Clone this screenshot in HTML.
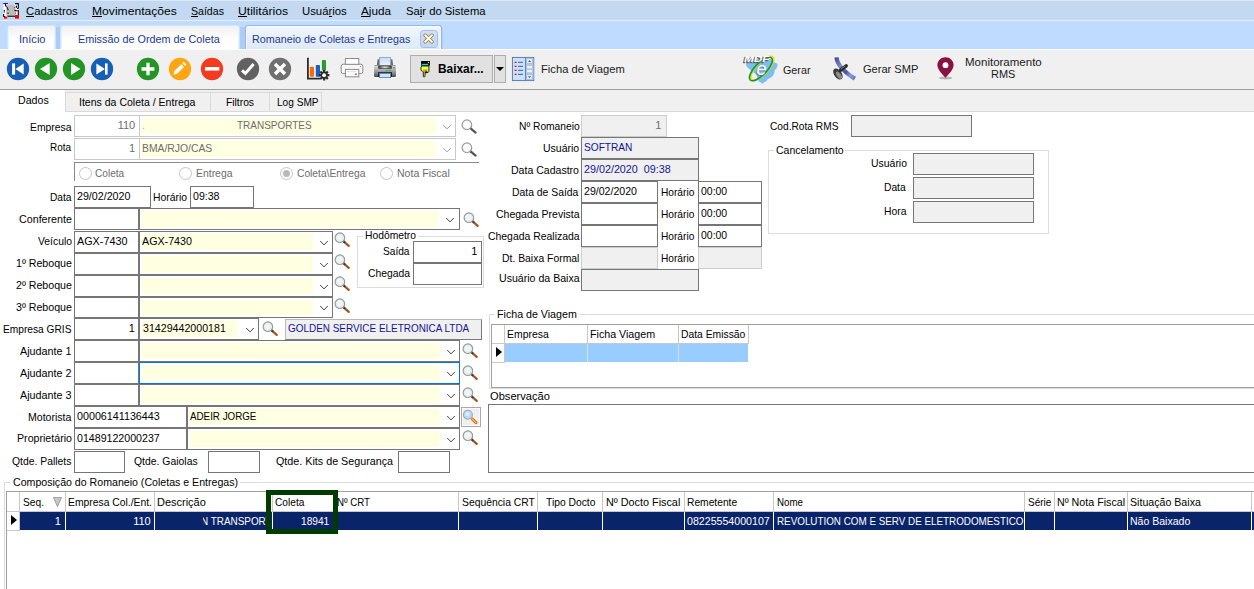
<!DOCTYPE html>
<html lang="pt-BR">
<head>
<meta charset="utf-8">
<title>Romaneio de Coletas e Entregas</title>
<style>
html,body{margin:0;padding:0;background:#fff;}
body{width:1254px;height:589px;overflow:hidden;font-family:"Liberation Sans",sans-serif;font-size:11px;}
#app{position:relative;width:1254px;height:589px;overflow:hidden;background:#fff;}
#app div,#app span,#app svg{position:absolute;box-sizing:border-box;}
.t{white-space:pre;line-height:13px;transform-origin:0 50%;}
.f{border:1px solid #767676;background:#fff;}
.fg{border:1px solid #767676;background:#f0f0f0;}
.fl{border:1px solid #c8c8c8;background:#fff;}
.flg{border:1px solid #cdcdcd;background:#f0f0f0;}
.y{background:#ffffe1;}
.gb{border:1px solid #dcdcdc;}
.hd{background:#fff;border-right:1px solid #c8c8c8;border-bottom:1px solid #c8c8c8;}
.nv{background:#0a246a;}
</style>
</head>
<body>
<div id="app">
<div style="left:0;top:0;width:1254px;height:21px;background:#c2d9f1;border-top:1px solid #dbe8f7;border-bottom:1px solid #e3eefb;"></div>
<div style="left:0;top:21px;width:1254px;height:28px;background:#bfdbff;"></div>
<div style="left:0;top:49px;width:1254px;height:40px;background:#f0f0f0;border-top:1px solid #fbfcfe;"></div>
<div style="left:0;top:89px;width:1254px;height:1px;background:#a0a0a0;"></div>
<div style="left:0;top:90px;width:1254px;height:22px;background:#f0f0f0;border-bottom:1px solid #d9d9d9;"></div>
<svg style="left:3px;top:3px;width:16px;height:16px;overflow:visible" viewBox="0 0 16 16"><rect x="0.3" y="1" width="4.500" height="12.500" fill="#fff"/><rect x="11" y="1" width="4.700" height="11.500" fill="#fff"/><rect x="3.200" y="2.200" width="9.300" height="10.800" fill="#bcbcbc"/><rect x="0.200" y="0" width="4.800" height="1.100" fill="#0a18e8"/><rect x="12.300" y="0" width="3.400" height="1.100" fill="#0a18e8"/><path d="M2.500 1v1.500l1 1.200M4 4.300l1 1.300M5 6v1.200M5 9.500v1.300M0.800 7.200l1 0.600M0.800 8.800l1 0.500M0.600 11v2.300l1.500 0.500M4.500 13.300h7.500M12 0.700h3.300v4.500l-1.300 0.300M13.500 2.800v2M11.500 4.500l0.600 0.300M11.500 7l1 0.800h2M12.300 9.800l0.500 0.500M15.300 7v5.500" stroke="#000" stroke-width="1.100" fill="none"/><rect x="1" y="13.600" width="3.200" height="2" fill="#ff0000"/><rect x="12" y="12" width="4" height="3.600" fill="#ff0000"/></svg>
<span class="t" style="font-size:11.5px;color:#000;transform:scaleX(0.9868);left:26.00px;top:4.52px;line-height:13px;">Cadastros</span>
<div style="left:26.00px;top:16px;width:8.20px;height:1px;background:#000;"></div>
<span class="t" style="font-size:11.5px;color:#000;transform:scaleX(1.0534);left:92.10px;top:4.52px;line-height:13px;">Movimentações</span>
<div style="left:92.10px;top:16px;width:10.09px;height:1px;background:#000;"></div>
<span class="t" style="font-size:11.5px;color:#000;transform:scaleX(0.9195);left:190.90px;top:4.52px;line-height:13px;">Saídas</span>
<div style="left:190.90px;top:16px;width:7.05px;height:1px;background:#000;"></div>
<span class="t" style="font-size:11.5px;color:#000;transform:scaleX(1.0572);left:238.00px;top:4.52px;line-height:13px;">Utilitários</span>
<div style="left:238.00px;top:16px;width:8.79px;height:1px;background:#000;"></div>
<span class="t" style="font-size:11.5px;color:#000;transform:scaleX(0.9851);left:302.10px;top:4.52px;line-height:13px;">Usuários</span>
<div style="left:328.54px;top:16px;width:3.77px;height:1px;background:#000;"></div>
<span class="t" style="font-size:11.5px;color:#000;transform:scaleX(1.0202);left:361.20px;top:4.52px;line-height:13px;">Ajuda</span>
<div style="left:361.20px;top:16px;width:7.83px;height:1px;background:#000;"></div>
<span class="t" style="font-size:11.5px;color:#000;transform:scaleX(0.9798);left:405.90px;top:4.52px;line-height:13px;">Sair do Sistema</span>
<div style="left:419.68px;top:16px;width:2.51px;height:1px;background:#000;"></div>
<div style="left:55px;top:27px;width:5px;height:22px;background:#afccf7;"></div>
<div style="left:240px;top:27px;width:5.5px;height:22px;background:#afccf7;"></div>
<div style="left:441px;top:28px;width:1.5px;height:21px;background:#afccf7;"></div>
<div style="left:7px;top:25px;width:48.5px;height:24px;background:linear-gradient(#f1f1f1,#fdfdfd 55%,#fff);border:1px solid #cfe3f7;border-bottom:0;border-radius:3px 3px 0 0;box-shadow:inset 1px 0 0 #dff6ff,inset -1px 0 0 #dff6ff;"></div>
<div style="left:59.5px;top:25px;width:180.5px;height:24px;background:linear-gradient(#f1f1f1,#fdfdfd 55%,#fff);border:1px solid #cfe3f7;border-bottom:0;border-radius:3px 3px 0 0;box-shadow:inset 1px 0 0 #dff6ff,inset -1px 0 0 #dff6ff;"></div>
<div style="left:245px;top:25px;width:196.5px;height:24px;background:linear-gradient(#f1f6fd,#dee9f8);border:1px solid #94b9ea;border-bottom:0;border-radius:3px 3px 0 0;box-shadow:inset 0 1px 0 #fbfdff,inset 1px 0 0 #f4f8fe,inset -1px 0 0 #f4f8fe;"></div>
<span class="t" style="font-size:11.5px;color:#1c3a8e;transform:scaleX(0.9647);left:19.00px;top:32.52px;line-height:13px;">Início</span>
<span class="t" style="font-size:11.5px;color:#1c3a8e;transform:scaleX(0.9399);left:78.10px;top:32.52px;line-height:13px;">Emissão de Ordem de Coleta</span>
<span class="t" style="font-size:11.5px;color:#1c3a8e;transform:scaleX(0.9350);left:252.00px;top:32.52px;line-height:13px;">Romaneio de Coletas e Entregas</span>
<svg style="left:420px;top:30px;width:18px;height:18px;overflow:visible" viewBox="0 0 18 18"><defs><linearGradient id="cbg" x1="0" y1="0" x2="0" y2="1"><stop offset="0" stop-color="#cfe0f6"/><stop offset="1" stop-color="#c3d7f1"/></linearGradient></defs><rect x="0.5" y="0.5" width="17" height="17" rx="2.8" fill="url(#cbg)" stroke="#a3c0e8"/><path d="M5.2 5.300l6.700 6.400M11.900 5.300L5.200 11.700" stroke="#8a7528" stroke-width="3.600" stroke-linecap="round"/><path d="M5.200 5.300l6.700 6.400M11.900 5.300L5.200 11.700" stroke="#fffef6" stroke-width="2.100" stroke-linecap="round"/></svg>
<svg style="left:5.8px;top:57px;width:24px;height:24px;overflow:visible" viewBox="-12 -12 24 24"><circle r="11.15" fill="#175eb5"/><rect x="-5.9" y="-5.6" width="3" height="11.2" fill="#fff"/><path d="M-2.6 0L5.7 -5.6V5.6Z" fill="#fff"/></svg>
<svg style="left:33.9px;top:57px;width:24px;height:24px;overflow:visible" viewBox="-12 -12 24 24"><circle r="11.15" fill="#259427"/><path d="M-6 0L3.7 -5.9V5.9Z" fill="#fff"/></svg>
<svg style="left:61.9px;top:57px;width:24px;height:24px;overflow:visible" viewBox="-12 -12 24 24"><circle r="11.15" fill="#259427"/><path d="M6.4 0L-2.9 -5.9V5.9Z" fill="#fff"/></svg>
<svg style="left:90px;top:57px;width:24px;height:24px;overflow:visible" viewBox="-12 -12 24 24"><circle r="11.15" fill="#175eb5"/><rect x="3" y="-5.6" width="2.6" height="11.2" fill="#fff"/><path d="M2.9 0L-5.6 -5.6V5.6Z" fill="#fff"/></svg>
<svg style="left:136px;top:57px;width:24px;height:24px;overflow:visible" viewBox="-12 -12 24 24"><circle r="11.15" fill="#259427"/><path d="M-6.5 0H6.4M0 -6.2V6.2" stroke="#fff" stroke-width="3.3"/></svg>
<svg style="left:167.8px;top:57px;width:24px;height:24px;overflow:visible" viewBox="-12 -12 24 24"><circle r="11.15" fill="#fea50f"/><path d="M-6.600 5.800l1-3.700 6.800-6.800 2.700 2.700-6.800 6.800z" fill="#fff"/><path d="M2.300-5.800l1.400-1.400 2.700 2.700-1.400 1.400z" fill="#fff"/></svg>
<svg style="left:199.6px;top:57px;width:24px;height:24px;overflow:visible" viewBox="-12 -12 24 24"><circle r="11.15" fill="#f43b20"/><path d="M-7 -0.2H7.3" stroke="#fff" stroke-width="3.6"/></svg>
<svg style="left:235.8px;top:57px;width:24px;height:24px;overflow:visible" viewBox="-12 -12 24 24"><circle r="11.15" fill="#616161"/><path d="M-6 1.3L-2.6 4.4L5.6 -5" stroke="#fff" stroke-width="3" fill="none"/></svg>
<svg style="left:267.9px;top:57px;width:24px;height:24px;overflow:visible" viewBox="-12 -12 24 24"><circle r="11.15" fill="#707070"/><path d="M-5 -5L5 5M5 -5L-5 5" stroke="#fff" stroke-width="3.4"/></svg>
<svg style="left:306px;top:57px;width:24px;height:24px;overflow:visible" viewBox="0 0 24 24"><path d="M1.9 1.3V21.6H14" stroke="#2b2b2b" stroke-width="1.8" fill="none" stroke-linecap="round"/><rect x="3.8" y="9.7" width="4.2" height="10.1" rx="0.8" fill="#ff6a00"/><rect x="9.8" y="7.9" width="4.2" height="11.9" rx="0.8" fill="#1a5fc4"/><rect x="15.9" y="3" width="4.1" height="10.6" rx="0.8" fill="#2a9a2a"/><g transform="translate(18.1 18.2)"><circle r="3.6" fill="#2b2b2b"/><g stroke="#2b2b2b" stroke-width="2.2"><path d="M0-5.3V5.3M-5.3 0H5.3M-3.75-3.75L3.75 3.75M3.75-3.75L-3.75 3.75"/></g><circle r="1.9" fill="#fff"/></g></svg>
<svg style="left:340px;top:57px;width:24px;height:22px;overflow:visible" viewBox="0 0 24 22"><rect x="1.2" y="7.2" width="21.6" height="9.4" rx="2" fill="#f7f7f7" stroke="#8c8c8c" stroke-width="1"/><rect x="5.4" y="1.5" width="13.4" height="5.8" fill="#fff" stroke="#8c8c8c" stroke-width="1"/><rect x="5.4" y="12.4" width="13.4" height="7.4" fill="#fff" stroke="#8c8c8c" stroke-width="1"/><rect x="7" y="14.3" width="9" height="0.8" fill="#d8d8d8"/><rect x="15.2" y="16.5" width="1.6" height="1.6" fill="#c04070"/><rect x="20" y="9" width="1.2" height="1.2" fill="#ff7a7a"/></svg>
<svg style="left:373px;top:56px;width:24px;height:24px;overflow:visible" viewBox="0 0 24 24"><defs><linearGradient id="pg" x1="0" y1="0" x2="0" y2="1"><stop offset="0" stop-color="#4d4d4d"/><stop offset="0.08" stop-color="#d8d8d8"/><stop offset="0.5" stop-color="#a2a2a2"/><stop offset="0.85" stop-color="#6a6a6a"/><stop offset="1" stop-color="#3c3c3c"/></linearGradient><linearGradient id="pb" x1="0" y1="0" x2="0" y2="1"><stop offset="0" stop-color="#c6dbf2"/><stop offset="1" stop-color="#e9f1fb"/></linearGradient><radialGradient id="ps" cx="0.5" cy="0.5" r="0.5"><stop offset="0" stop-color="#fff"/><stop offset="0.5" stop-color="#999"/><stop offset="1" stop-color="#2c2c2c"/></radialGradient></defs><rect x="0.2" y="8" width="23.600" height="14.600" rx="2.500" fill="#fff" opacity="0.7"/><path d="M4.600 3.200h14.800l0.800 6H3.800z" fill="#6e6e6e"/><rect x="6.600" y="1.400" width="11" height="8" fill="url(#pb)" stroke="#7ba7d9" stroke-width="0.9"/><rect x="1" y="9" width="22" height="12" rx="1.200" fill="url(#pg)"/><rect x="5.300" y="9.700" width="13.400" height="3" fill="url(#ps)"/><rect x="20" y="11.200" width="1.800" height="1.200" fill="#666"/><rect x="12.800" y="14.100" width="2" height="1.100" fill="#18c818"/><rect x="15.900" y="14.100" width="2" height="1.100" fill="#18c818"/><rect x="5.100" y="16.100" width="13.900" height="4.900" fill="#1e1e1e"/><rect x="6.600" y="17.300" width="11" height="4.300" fill="#d3e4f7" stroke="#4a80c8" stroke-width="0.9"/></svg>
<div style="left:410px;top:55px;width:83px;height:28px;background:#e1e1e1;border:1px solid #adadad;"></div>
<div style="left:494px;top:55px;width:12px;height:28px;background:#e1e1e1;border:1px solid #adadad;"></div>
<div style="left:496px;top:67px;width:0;height:0;border-left:4px solid transparent;border-right:4px solid transparent;border-top:4px solid #000;"></div>
<svg style="left:419px;top:60px;width:12px;height:18px;overflow:visible" viewBox="0 0 12 18"><rect x="2.100" y="1" width="8.800" height="4.700" fill="#000"/><rect x="2.900" y="3.800" width="6.300" height="1.400" fill="#10d8e8"/><rect x="8.800" y="1.800" width="1.300" height="1.300" fill="#f0e020"/><path d="M2 6h8v5.400l-0.900 1.100h-1.200l-0.400-1.100l-0.300 1.600h-1l-0.300-1.200l-0.300 2.200v2.200l-1 1l-1-1v-4.200l-0.600-0.500l-1.200-0.600l-0.800-1v-2.400z" fill="#ffff40" stroke="#000" stroke-width="0.9" stroke-linejoin="round" transform="translate(1.100 0) scale(0.88 1)"/><path d="M4.900 9.500v2.500M6.300 9.500v3M7.700 9.500v2.200" stroke="#000" stroke-width="0.500"/></svg>
<span class="t" style="font-size:12px;color:#000;transform:scaleX(0.9910);font-weight:bold;left:437.60px;top:63.44px;line-height:13px;">Baixar...</span>
<svg style="left:512px;top:57px;width:22.2px;height:24px;overflow:visible" viewBox="0 0 22.2 24"><rect x="0.4" y="0.4" width="21.4" height="23.2" fill="#cfe0f4" stroke="#4776b4" stroke-width="0.9"/><rect x="13" y="0.4" width="0.9" height="23.2" fill="#4776b4"/><rect x="13.9" y="0.9" width="7.4" height="22.2" fill="#b4cbe8"/><rect x="2.6" y="4.7" width="2" height="1.3" fill="#e02020"/><rect x="6" y="4.8" width="5" height="1.1" fill="#3a70c0"/><rect x="2.6" y="8.7" width="2" height="1.3" fill="#e02020"/><rect x="6" y="8.8" width="5" height="1.1" fill="#3a70c0"/><rect x="2.6" y="12.7" width="2" height="1.3" fill="#e02020"/><rect x="6" y="12.8" width="5" height="1.1" fill="#3a70c0"/><rect x="2.6" y="16.7" width="2" height="1.3" fill="#e02020"/><rect x="6" y="16.8" width="5" height="1.1" fill="#3a70c0"/><rect x="14.6" y="1.6" width="6" height="5" rx="0.8" fill="#e6eef9" stroke="#7f9fca" stroke-width="0.5"/><rect x="14.6" y="17.4" width="6" height="5" rx="0.8" fill="#e6eef9" stroke="#7f9fca" stroke-width="0.5"/><rect x="14.6" y="8.4" width="6" height="3.4" rx="0.8" fill="#eef3fa" stroke="#8faad0" stroke-width="0.5"/><rect x="14.6" y="12.4" width="6" height="3.4" rx="0.8" fill="#eef3fa" stroke="#8faad0" stroke-width="0.5"/><path d="M16 5l1.6-1.8L19.2 5z" fill="#35598f"/><path d="M16 19.2l1.6 1.8 1.6-1.8z" fill="#35598f"/></svg>
<span class="t" style="font-size:11.5px;color:#1a1a1a;transform:scaleX(0.9725);left:540.70px;top:62.52px;line-height:13px;">Ficha de Viagem</span>
<svg style="left:743px;top:55px;width:35px;height:30px;overflow:visible" viewBox="0 0 35 30"><path d="M3 9.200l1-3.200l4-2.200l6 0.400l4-1.600l5 0.200l4 1.200l3 2l2 1.800l2.200 0.800l0.400 2.400l-1.200 2.500l-1.700 1.500l-0.400 3l-1.600 3l-2.500 2l-2.500 1l-1.500 2.500l-2 0.500l-1.700 2l-1.600-1.500l-2-1l-1.400-2.500l-0.500-3l-2-2.500l-3-1.500l-2-2.500l-3-2.500z" fill="#7cbef0"/><ellipse cx="19.300" cy="13.200" rx="15.300" ry="5.900" transform="rotate(-46 19.300 13.200)" fill="none" stroke="#f2d81c" stroke-width="1.700"/><ellipse cx="17.900" cy="14" rx="15.300" ry="5.900" transform="rotate(-46 17.900 14)" fill="none" stroke="#10993a" stroke-width="1.600"/><text x="12.700" y="20.700" font-family="Liberation Sans, sans-serif" font-style="italic" font-size="18" fill="#666" opacity="0.7">e</text><text x="13.400" y="20" font-family="Liberation Sans, sans-serif" font-style="italic" font-size="18" fill="#fff">e</text><text x="0" y="7.900" font-family="Liberation Sans, sans-serif" font-style="italic" font-weight="bold" font-size="9.200" fill="#555" stroke="#666" stroke-width="0.500" textLength="25.500" lengthAdjust="spacingAndGlyphs">MDF</text><text x="0.900" y="7.200" font-family="Liberation Sans, sans-serif" font-style="italic" font-weight="bold" font-size="9.200" fill="#fff" textLength="25.500" lengthAdjust="spacingAndGlyphs">MDF</text></svg>
<span class="t" style="font-size:11.5px;color:#1a1a1a;transform:scaleX(0.9362);left:782.80px;top:64.02px;line-height:13px;">Gerar</span>
<svg style="left:833px;top:57px;width:24px;height:24px;overflow:visible" viewBox="0 0 24 24"><defs><linearGradient id="sg" x1="0" y1="0" x2="1" y2="1"><stop offset="0" stop-color="#46509a"/><stop offset="0.3" stop-color="#7a86cc"/><stop offset="0.6" stop-color="#4a549e"/><stop offset="0.8" stop-color="#8c98da"/><stop offset="1" stop-color="#6878c0"/></linearGradient></defs><path d="M3.500 0.400C4.200 7.500 11 15 21.900 21.700" stroke="url(#sg)" stroke-width="4.300" fill="none"/><ellipse cx="4.900" cy="17" rx="3.700" ry="6.300" transform="rotate(-36 4.900 17)" fill="#3a3a3a"/><ellipse cx="5.900" cy="18.200" rx="2" ry="4.200" transform="rotate(-36 5.900 18.200)" fill="#8e8e8e"/><path d="M7.600 13.200L13.200 8.900" stroke="#262626" stroke-width="3.400" stroke-linecap="round"/><path d="M8.200 12L12 9.200" stroke="#8a8a8a" stroke-width="0.900" stroke-linecap="round"/></svg>
<span class="t" style="font-size:11px;color:#1a1a1a;transform:scaleX(1.0049);left:863.30px;top:63.09px;line-height:13px;">Gerar SMP</span>
<svg style="left:937px;top:57px;width:17px;height:22.5px;overflow:visible" viewBox="0 0 17 22.5"><ellipse cx="8.6" cy="21" rx="6.800" ry="1.500" fill="#b5b5b5"/><path d="M8.500 0.300c-4.500 0-8.100 3.400-8.100 7.700c0 4.900 5.200 9.300 8.100 12.800c2.900-3.500 8.100-7.900 8.100-12.800c0-4.300-3.600-7.700-8.100-7.700z" fill="#8c1141"/><circle cx="8.500" cy="8.200" r="2.900" fill="#fff"/></svg>
<span class="t" style="font-size:11px;color:#1a1a1a;transform:scaleX(1.0462);left:965.40px;top:55.99px;line-height:13px;">Monitoramento</span>
<span class="t" style="font-size:11px;color:#1a1a1a;transform:scaleX(0.9944);left:991.30px;top:67.79px;line-height:13px;">RMS</span>
<div style="left:0;top:90px;width:65px;height:22px;background:#fff;"></div>
<div style="left:65px;top:92px;width:257px;height:20px;background:#f0f0f0;border:1px solid #d9d9d9;"></div>
<div style="left:210px;top:92px;width:1px;height:20px;background:#d9d9d9;"></div>
<div style="left:269px;top:92px;width:1px;height:20px;background:#d9d9d9;"></div>
<span class="t" style="font-size:11px;color:#000;transform:scaleX(0.9650);left:18.00px;top:94.29px;line-height:13px;">Dados</span>
<span class="t" style="font-size:11px;color:#000;transform:scaleX(0.9572);left:79.10px;top:96.19px;line-height:13px;">Itens da Coleta / Entrega</span>
<span class="t" style="font-size:11px;color:#000;transform:scaleX(0.9353);left:226.40px;top:96.19px;line-height:13px;">Filtros</span>
<span class="t" style="font-size:11px;color:#000;transform:scaleX(0.9187);left:276.50px;top:96.19px;line-height:13px;">Log SMP</span>
<span class="t" style="font-size:11px;color:#000;transform:scaleX(0.9425);left:30.10px;top:120.69px;line-height:13px;">Empresa</span>
<div class="fl" style="left:74px;top:115px;width:66px;height:22px;"></div>
<span class="t" style="font-size:11px;color:#6d6d6d;left:117.64px;top:118.89px;line-height:13px;">110</span>
<div class="fl" style="left:139px;top:115px;width:317px;height:22px;"></div>
<div class="y" style="left:142px;top:118px;width:294px;height:16px;"></div>
<svg style="left:442px;top:122.5px;width:10px;height:8px;overflow:visible" viewBox="-5 -4 10 8"><path d="M-3.800 -2L0 1.900L3.800 -2" stroke="#a0a0a0" stroke-width="1" fill="none"/></svg>
<span class="t" style="font-size:11px;color:#e8a050;left:142.00px;top:118.89px;line-height:13px;">.</span>
<span class="t" style="font-size:11px;color:#6d6d6d;transform:scaleX(0.9061);left:237.20px;top:118.89px;line-height:13px;">TRANSPORTES</span>
<svg style="left:461.4px;top:118.7px;width:16px;height:15px;overflow:visible" viewBox="0 0 16 15"><path d="M9.600 9.400L14.600 13.600" stroke="#555" stroke-width="2.200" stroke-linecap="round"/><circle cx="5.900" cy="5.700" r="4.800" fill="#f0f3f4" stroke="#9a9a9a" stroke-width="1.200"/><circle cx="5.900" cy="5.700" r="3.500" fill="#fafcfc"/></svg>
<span class="t" style="font-size:11px;color:#000;transform:scaleX(0.9032);left:49.60px;top:140.89px;line-height:13px;">Rota</span>
<div class="fl" style="left:74px;top:138px;width:66px;height:22px;"></div>
<span class="t" style="font-size:11px;color:#6d6d6d;left:129.07px;top:141.89px;line-height:13px;">1</span>
<div class="fl" style="left:139px;top:138px;width:317px;height:22px;"></div>
<div class="y" style="left:142px;top:141px;width:294px;height:16px;"></div>
<svg style="left:442px;top:145.5px;width:10px;height:8px;overflow:visible" viewBox="-5 -4 10 8"><path d="M-3.800 -2L0 1.900L3.800 -2" stroke="#a0a0a0" stroke-width="1" fill="none"/></svg>
<span class="t" style="font-size:11px;color:#6d6d6d;transform:scaleX(0.9424);left:142.00px;top:141.89px;line-height:13px;">BMA/RJO/CAS</span>
<svg style="left:461.4px;top:141.8px;width:16px;height:15px;overflow:visible" viewBox="0 0 16 15"><path d="M9.600 9.400L14.600 13.600" stroke="#555" stroke-width="2.200" stroke-linecap="round"/><circle cx="5.900" cy="5.700" r="4.800" fill="#f0f3f4" stroke="#9a9a9a" stroke-width="1.200"/><circle cx="5.900" cy="5.700" r="3.500" fill="#fafcfc"/></svg>
<div style="left:74px;top:162px;width:405px;height:1px;background:#8a8a8a;"></div>
<div style="left:74px;top:162px;width:1px;height:19px;background:#8a8a8a;"></div>
<div style="left:78.7px;top:166.5px;width:13px;height:13px;border-radius:50%;border:1px solid #c4c4c4;background:#fff;"></div>
<div style="left:179.4px;top:166.5px;width:13px;height:13px;border-radius:50%;border:1px solid #c4c4c4;background:#fff;"></div>
<div style="left:279.9px;top:166.5px;width:13px;height:13px;border-radius:50%;border:1px solid #c4c4c4;background:#fff;"></div>
<div style="left:282.9px;top:169.5px;width:7px;height:7px;border-radius:50%;background:#b9b9b9;"></div>
<div style="left:380.4px;top:166.5px;width:13px;height:13px;border-radius:50%;border:1px solid #c4c4c4;background:#fff;"></div>
<span class="t" style="font-size:11px;color:#6d6d6d;transform:scaleX(0.9179);left:95.40px;top:167.19px;line-height:13px;">Coleta</span>
<span class="t" style="font-size:11px;color:#6d6d6d;transform:scaleX(0.9465);left:195.90px;top:167.19px;line-height:13px;">Entrega</span>
<span class="t" style="font-size:11px;color:#6d6d6d;transform:scaleX(0.9314);left:297.00px;top:167.19px;line-height:13px;">Coleta\Entrega</span>
<span class="t" style="font-size:11px;color:#6d6d6d;transform:scaleX(0.9595);left:397.40px;top:167.19px;line-height:13px;">Nota Fiscal</span>
<span class="t" style="font-size:11px;color:#000;transform:scaleX(0.9247);left:50.10px;top:190.69px;line-height:13px;">Data</span>
<div class="f" style="left:74px;top:186px;width:77px;height:22px;"></div>
<span class="t" style="font-size:11px;color:#000;transform:scaleX(0.9705);left:77.10px;top:189.69px;line-height:13px;">29/02/2020</span>
<span class="t" style="font-size:11px;color:#000;transform:scaleX(0.9428);left:153.20px;top:190.69px;line-height:13px;">Horário</span>
<div class="f" style="left:190px;top:186px;width:64px;height:22px;"></div>
<span class="t" style="font-size:11px;color:#000;transform:scaleX(0.9615);left:193.30px;top:189.69px;line-height:13px;">09:38</span>
<span class="t" style="font-size:11px;color:#000;transform:scaleX(0.9730);left:18.60px;top:212.69px;line-height:13px;">Conferente</span>
<div class="f" style="left:74px;top:208px;width:65px;height:22px;"></div>
<div class="f" style="left:139px;top:208px;width:321px;height:22px;"></div>
<div class="y" style="left:142px;top:211px;width:296.6px;height:16px;"></div>
<svg style="left:444.6px;top:215.5px;width:10px;height:8px;overflow:visible" viewBox="-5 -4 10 8"><path d="M-3.800 -2L0 1.900L3.800 -2" stroke="#404040" stroke-width="1" fill="none"/></svg>
<svg style="left:463.4px;top:211.5px;width:16px;height:15px;overflow:visible" viewBox="0 0 16 15"><path d="M9.800 9.500L14.700 13.900" stroke="#a9541f" stroke-width="2.300" stroke-linecap="round"/><path d="M9.300 9L11.100 10.700" stroke="#4a3a30" stroke-width="2"/><circle cx="5.900" cy="5.700" r="4.800" fill="#e6ebeb" stroke="#8d9a9b" stroke-width="1.100"/><circle cx="5.600" cy="5.400" r="2.800" fill="#f1f5f5"/></svg>
<span class="t" style="font-size:11px;color:#000;transform:scaleX(0.9416);left:37.60px;top:234.89px;line-height:13px;">Veículo</span>
<div class="f" style="left:74px;top:231px;width:65px;height:22px;"></div>
<div class="f" style="left:139px;top:231px;width:194px;height:22px;"></div>
<div class="y" style="left:142px;top:234px;width:171px;height:16px;"></div>
<svg style="left:319px;top:238.5px;width:10px;height:8px;overflow:visible" viewBox="-5 -4 10 8"><path d="M-3.800 -2L0 1.900L3.800 -2" stroke="#404040" stroke-width="1" fill="none"/></svg>
<svg style="left:334.4px;top:231.5px;width:16px;height:15px;overflow:visible" viewBox="0 0 16 15"><path d="M9.800 9.500L14.700 13.900" stroke="#a9541f" stroke-width="2.300" stroke-linecap="round"/><path d="M9.300 9L11.100 10.700" stroke="#4a3a30" stroke-width="2"/><circle cx="5.900" cy="5.700" r="4.800" fill="#e6ebeb" stroke="#8d9a9b" stroke-width="1.100"/><circle cx="5.600" cy="5.400" r="2.800" fill="#f1f5f5"/></svg>
<span class="t" style="font-size:11px;color:#000;transform:scaleX(0.9673);left:15.60px;top:256.89px;line-height:13px;">1º Reboque</span>
<div class="f" style="left:74px;top:253px;width:65px;height:22px;"></div>
<div class="f" style="left:139px;top:253px;width:194px;height:22px;"></div>
<div class="y" style="left:142px;top:256px;width:171px;height:16px;"></div>
<svg style="left:319px;top:260.5px;width:10px;height:8px;overflow:visible" viewBox="-5 -4 10 8"><path d="M-3.800 -2L0 1.900L3.800 -2" stroke="#404040" stroke-width="1" fill="none"/></svg>
<svg style="left:334.4px;top:253.5px;width:16px;height:15px;overflow:visible" viewBox="0 0 16 15"><path d="M9.800 9.500L14.700 13.900" stroke="#a9541f" stroke-width="2.300" stroke-linecap="round"/><path d="M9.300 9L11.100 10.700" stroke="#4a3a30" stroke-width="2"/><circle cx="5.900" cy="5.700" r="4.800" fill="#e6ebeb" stroke="#8d9a9b" stroke-width="1.100"/><circle cx="5.600" cy="5.400" r="2.800" fill="#f1f5f5"/></svg>
<span class="t" style="font-size:11px;color:#000;transform:scaleX(0.9673);left:15.60px;top:278.89px;line-height:13px;">2º Reboque</span>
<div class="f" style="left:74px;top:275px;width:65px;height:22px;"></div>
<div class="f" style="left:139px;top:275px;width:194px;height:22px;"></div>
<div class="y" style="left:142px;top:278px;width:171px;height:16px;"></div>
<svg style="left:319px;top:282.5px;width:10px;height:8px;overflow:visible" viewBox="-5 -4 10 8"><path d="M-3.800 -2L0 1.900L3.800 -2" stroke="#404040" stroke-width="1" fill="none"/></svg>
<svg style="left:334.4px;top:275.5px;width:16px;height:15px;overflow:visible" viewBox="0 0 16 15"><path d="M9.800 9.500L14.700 13.900" stroke="#a9541f" stroke-width="2.300" stroke-linecap="round"/><path d="M9.300 9L11.100 10.700" stroke="#4a3a30" stroke-width="2"/><circle cx="5.900" cy="5.700" r="4.800" fill="#e6ebeb" stroke="#8d9a9b" stroke-width="1.100"/><circle cx="5.600" cy="5.400" r="2.800" fill="#f1f5f5"/></svg>
<span class="t" style="font-size:11px;color:#000;transform:scaleX(0.9673);left:15.60px;top:300.89px;line-height:13px;">3º Reboque</span>
<div class="f" style="left:74px;top:297px;width:65px;height:21px;"></div>
<div class="f" style="left:139px;top:297px;width:194px;height:21px;"></div>
<div class="y" style="left:142px;top:300px;width:171px;height:15px;"></div>
<svg style="left:319px;top:304px;width:10px;height:8px;overflow:visible" viewBox="-5 -4 10 8"><path d="M-3.800 -2L0 1.900L3.800 -2" stroke="#404040" stroke-width="1" fill="none"/></svg>
<svg style="left:334.4px;top:297.5px;width:16px;height:15px;overflow:visible" viewBox="0 0 16 15"><path d="M9.800 9.500L14.700 13.900" stroke="#a9541f" stroke-width="2.300" stroke-linecap="round"/><path d="M9.300 9L11.100 10.700" stroke="#4a3a30" stroke-width="2"/><circle cx="5.900" cy="5.700" r="4.800" fill="#e6ebeb" stroke="#8d9a9b" stroke-width="1.100"/><circle cx="5.600" cy="5.400" r="2.800" fill="#f1f5f5"/></svg>
<span class="t" style="font-size:11px;color:#000;transform:scaleX(0.9824);left:77.10px;top:234.69px;line-height:13px;">AGX-7430</span>
<span class="t" style="font-size:11px;color:#000;transform:scaleX(0.9726);left:142.20px;top:234.69px;line-height:13px;">AGX-7430</span>
<div class="gb" style="left:357px;top:236px;width:127px;height:52px;"></div>
<div style="left:363px;top:230px;width:55px;height:12px;background:#fff;"></div>
<span class="t" style="font-size:11px;color:#000;transform:scaleX(0.9369);left:365.00px;top:229.29px;line-height:13px;">Hodômetro</span>
<span class="t" style="font-size:11px;color:#000;transform:scaleX(0.9207);left:383.10px;top:244.99px;line-height:13px;">Saída</span>
<div class="f" style="left:413px;top:241px;width:69px;height:22px;"></div>
<span class="t" style="font-size:11px;color:#000;left:471.18px;top:244.69px;line-height:13px;">1</span>
<span class="t" style="font-size:11px;color:#000;transform:scaleX(0.9399);left:368.00px;top:267.19px;line-height:13px;">Chegada</span>
<div class="f" style="left:413px;top:263px;width:69px;height:22px;"></div>
<span class="t" style="font-size:11px;color:#000;transform:scaleX(0.9257);left:3.10px;top:322.69px;line-height:13px;">Empresa GRIS</span>
<div class="f" style="left:74px;top:318px;width:65px;height:22px;"></div>
<span class="t" style="font-size:11px;color:#000;left:128.68px;top:321.69px;line-height:13px;">1</span>
<div class="f" style="left:139px;top:318px;width:120px;height:22px;"></div>
<div class="y" style="left:142px;top:321px;width:96.4px;height:16px;"></div>
<svg style="left:245px;top:325.5px;width:10px;height:8px;overflow:visible" viewBox="-5 -4 10 8"><path d="M-3.800 -2L0 1.900L3.800 -2" stroke="#404040" stroke-width="1" fill="none"/></svg>
<span class="t" style="font-size:11px;color:#000;transform:scaleX(0.9668);left:142.60px;top:321.69px;line-height:13px;">31429442000181</span>
<svg style="left:261.8px;top:321.2px;width:16px;height:15px;overflow:visible" viewBox="0 0 16 15"><path d="M9.800 9.500L14.700 13.900" stroke="#a9541f" stroke-width="2.300" stroke-linecap="round"/><path d="M9.300 9L11.100 10.700" stroke="#4a3a30" stroke-width="2"/><circle cx="5.900" cy="5.700" r="4.800" fill="#e6ebeb" stroke="#8d9a9b" stroke-width="1.100"/><circle cx="5.600" cy="5.400" r="2.800" fill="#f1f5f5"/></svg>
<div class="flg" style="left:285px;top:319px;width:197px;height:21px;border-color:#b8b8b8 #7a7a7a #7a7a7a #b8b8b8;"></div>
<span class="t" style="font-size:11px;color:#141494;transform:scaleX(0.9030);left:288.40px;top:321.69px;line-height:13px;">GOLDEN SERVICE ELETRONICA LTDA</span>
<span class="t" style="font-size:11px;color:#000;transform:scaleX(0.9780);left:20.10px;top:344.69px;line-height:13px;">Ajudante 1</span>
<div class="f" style="left:74px;top:340px;width:65px;height:22px;"></div>
<div class="f" style="left:139px;top:340px;width:321px;height:22px;"></div>
<div class="y" style="left:142px;top:343px;width:297.6px;height:16px;"></div>
<svg style="left:445.6px;top:347.5px;width:10px;height:8px;overflow:visible" viewBox="-5 -4 10 8"><path d="M-3.800 -2L0 1.900L3.800 -2" stroke="#404040" stroke-width="1" fill="none"/></svg>
<svg style="left:462.3px;top:342.6px;width:16px;height:15px;overflow:visible" viewBox="0 0 16 15"><path d="M9.800 9.500L14.700 13.900" stroke="#a9541f" stroke-width="2.300" stroke-linecap="round"/><path d="M9.300 9L11.100 10.700" stroke="#4a3a30" stroke-width="2"/><circle cx="5.900" cy="5.700" r="4.800" fill="#e6ebeb" stroke="#8d9a9b" stroke-width="1.100"/><circle cx="5.600" cy="5.400" r="2.800" fill="#f1f5f5"/></svg>
<span class="t" style="font-size:11px;color:#000;transform:scaleX(0.9780);left:20.10px;top:366.69px;line-height:13px;">Ajudante 2</span>
<div class="f" style="left:74px;top:362px;width:65px;height:22px;"></div>
<div class="f" style="left:139px;top:362px;width:321px;height:22px;border-color:#0078d7;"></div>
<div class="y" style="left:142px;top:365px;width:297.6px;height:16px;"></div>
<svg style="left:445.6px;top:369.5px;width:10px;height:8px;overflow:visible" viewBox="-5 -4 10 8"><path d="M-3.800 -2L0 1.900L3.800 -2" stroke="#404040" stroke-width="1" fill="none"/></svg>
<svg style="left:462.3px;top:364.6px;width:16px;height:15px;overflow:visible" viewBox="0 0 16 15"><path d="M9.800 9.500L14.700 13.900" stroke="#a9541f" stroke-width="2.300" stroke-linecap="round"/><path d="M9.300 9L11.100 10.700" stroke="#4a3a30" stroke-width="2"/><circle cx="5.900" cy="5.700" r="4.800" fill="#e6ebeb" stroke="#8d9a9b" stroke-width="1.100"/><circle cx="5.600" cy="5.400" r="2.800" fill="#f1f5f5"/></svg>
<span class="t" style="font-size:11px;color:#000;transform:scaleX(0.9780);left:20.10px;top:388.69px;line-height:13px;">Ajudante 3</span>
<div class="f" style="left:74px;top:384px;width:65px;height:22px;"></div>
<div class="f" style="left:139px;top:384px;width:321px;height:22px;"></div>
<div class="y" style="left:142px;top:387px;width:297.6px;height:16px;"></div>
<svg style="left:445.6px;top:391.5px;width:10px;height:8px;overflow:visible" viewBox="-5 -4 10 8"><path d="M-3.800 -2L0 1.900L3.800 -2" stroke="#404040" stroke-width="1" fill="none"/></svg>
<svg style="left:462.3px;top:386.6px;width:16px;height:15px;overflow:visible" viewBox="0 0 16 15"><path d="M9.800 9.500L14.700 13.900" stroke="#a9541f" stroke-width="2.300" stroke-linecap="round"/><path d="M9.300 9L11.100 10.700" stroke="#4a3a30" stroke-width="2"/><circle cx="5.900" cy="5.700" r="4.800" fill="#e6ebeb" stroke="#8d9a9b" stroke-width="1.100"/><circle cx="5.600" cy="5.400" r="2.800" fill="#f1f5f5"/></svg>
<span class="t" style="font-size:11px;color:#000;transform:scaleX(0.9591);left:28.20px;top:411.49px;line-height:13px;">Motorista</span>
<div class="f" style="left:74px;top:406px;width:113px;height:22px;"></div>
<span class="t" style="font-size:11px;color:#000;transform:scaleX(0.9748);left:77.40px;top:409.69px;line-height:13px;">00006141136443</span>
<div class="f" style="left:187px;top:406px;width:273px;height:22px;"></div>
<div class="y" style="left:190px;top:409px;width:249.6px;height:16px;"></div>
<svg style="left:445.6px;top:413.5px;width:10px;height:8px;overflow:visible" viewBox="-5 -4 10 8"><path d="M-3.800 -2L0 1.900L3.800 -2" stroke="#404040" stroke-width="1" fill="none"/></svg>
<span class="t" style="font-size:11px;color:#000;transform:scaleX(0.8902);left:190.30px;top:409.69px;line-height:13px;">ADEIR JORGE</span>
<div class="f" style="left:461px;top:407px;width:20px;height:20px;border-color:#a8a8a8;background:#f0f0f0;box-shadow:inset 0 0 0 1px #fafafa;"></div>
<svg style="left:462.4px;top:408.9px;width:16px;height:15px;overflow:visible" viewBox="0 0 16 15"><path d="M10 9.700L14 13.700" stroke="#e0401c" stroke-width="2.800" stroke-linecap="round"/><path d="M10 9.700L14 13.700" stroke="#ffc21a" stroke-width="1.500" stroke-linecap="round"/><circle cx="5.900" cy="5.700" r="4.500" fill="#b4d9ff" stroke="#a3a9ae" stroke-width="1.100"/><circle cx="5.400" cy="5" r="2.300" fill="#d6ebff"/></svg>
<span class="t" style="font-size:11px;color:#000;transform:scaleX(0.9670);left:16.60px;top:431.89px;line-height:13px;">Proprietário</span>
<div class="f" style="left:74px;top:428px;width:113px;height:22px;"></div>
<span class="t" style="font-size:11px;color:#000;transform:scaleX(0.9656);left:77.40px;top:431.69px;line-height:13px;">01489122000237</span>
<div class="f" style="left:187px;top:428px;width:273px;height:22px;"></div>
<div class="y" style="left:190px;top:431px;width:249.6px;height:16px;"></div>
<svg style="left:445.6px;top:435.5px;width:10px;height:8px;overflow:visible" viewBox="-5 -4 10 8"><path d="M-3.800 -2L0 1.900L3.800 -2" stroke="#404040" stroke-width="1" fill="none"/></svg>
<svg style="left:461.8px;top:430.2px;width:16px;height:15px;overflow:visible" viewBox="0 0 16 15"><path d="M9.800 9.500L14.700 13.900" stroke="#a9541f" stroke-width="2.300" stroke-linecap="round"/><path d="M9.300 9L11.100 10.700" stroke="#4a3a30" stroke-width="2"/><circle cx="5.900" cy="5.700" r="4.800" fill="#e6ebeb" stroke="#8d9a9b" stroke-width="1.100"/><circle cx="5.600" cy="5.400" r="2.800" fill="#f1f5f5"/></svg>
<span class="t" style="font-size:11px;color:#000;transform:scaleX(0.9424);left:11.70px;top:454.69px;line-height:13px;">Qtde. Pallets</span>
<div class="f" style="left:74px;top:451px;width:51px;height:22px;"></div>
<span class="t" style="font-size:11px;color:#000;transform:scaleX(0.9463);left:133.60px;top:454.69px;line-height:13px;">Qtde. Gaiolas</span>
<div class="f" style="left:208px;top:451px;width:52px;height:22px;"></div>
<span class="t" style="font-size:11px;color:#000;transform:scaleX(0.9769);left:275.50px;top:454.69px;line-height:13px;">Qtde. Kits de Segurança</span>
<div class="f" style="left:398px;top:451px;width:52px;height:22px;"></div>
<span class="t" style="font-size:11px;color:#000;transform:scaleX(0.9314);left:518.70px;top:119.69px;line-height:13px;">Nº Romaneio</span>
<div class="flg" style="left:581px;top:115px;width:86px;height:22px;"></div>
<span class="t" style="font-size:11px;color:#6d6d6d;left:655.17px;top:118.69px;line-height:13px;">1</span>
<span class="t" style="font-size:11px;color:#000;transform:scaleX(0.9523);left:543.30px;top:141.69px;line-height:13px;">Usuário</span>
<div class="fg" style="left:581px;top:137px;width:118px;height:22px;"></div>
<span class="t" style="font-size:11px;color:#141494;transform:scaleX(0.9208);left:584.20px;top:140.69px;line-height:13px;">SOFTRAN</span>
<span class="t" style="font-size:11px;color:#000;transform:scaleX(0.9582);left:511.40px;top:163.69px;line-height:13px;">Data Cadastro</span>
<div class="fg" style="left:581px;top:159px;width:118px;height:22px;"></div>
<span class="t" style="font-size:11px;color:#141494;transform:scaleX(0.9773);left:584.20px;top:162.69px;line-height:13px;">29/02/2020  09:38</span>
<span class="t" style="font-size:11px;color:#000;transform:scaleX(0.9431);left:512.20px;top:185.69px;line-height:13px;">Data de Saída</span>
<div class="f" style="left:581px;top:181px;width:77px;height:22px;"></div>
<span class="t" style="font-size:11px;color:#000;transform:scaleX(0.9615);left:584.20px;top:184.69px;line-height:13px;">29/02/2020</span>
<span class="t" style="font-size:11px;color:#000;transform:scaleX(0.9554);left:495.80px;top:207.69px;line-height:13px;">Chegada Prevista</span>
<div class="f" style="left:581px;top:203px;width:77px;height:22px;"></div>
<span class="t" style="font-size:11px;color:#000;transform:scaleX(0.9474);left:488.40px;top:229.69px;line-height:13px;">Chegada Realizada</span>
<div class="f" style="left:581px;top:225px;width:77px;height:22px;"></div>
<span class="t" style="font-size:11px;color:#000;transform:scaleX(0.9446);left:502.00px;top:251.69px;line-height:13px;">Dt. Baixa Formal</span>
<div class="flg" style="left:581px;top:247px;width:77px;height:22px;"></div>
<span class="t" style="font-size:11px;color:#000;transform:scaleX(0.9629);left:498.70px;top:271.69px;line-height:13px;">Usuário da Baixa</span>
<div class="fg" style="left:581px;top:269px;width:118px;height:22px;"></div>
<span class="t" style="font-size:11px;color:#000;transform:scaleX(0.9234);left:661.30px;top:185.69px;line-height:13px;">Horário</span>
<div class="f" style="left:698px;top:181px;width:64px;height:22px;"></div>
<span class="t" style="font-size:11px;color:#000;transform:scaleX(0.9506);left:701.40px;top:184.69px;line-height:13px;">00:00</span>
<span class="t" style="font-size:11px;color:#000;transform:scaleX(0.9234);left:661.30px;top:207.69px;line-height:13px;">Horário</span>
<div class="f" style="left:698px;top:203px;width:64px;height:22px;"></div>
<span class="t" style="font-size:11px;color:#000;transform:scaleX(0.9506);left:701.40px;top:206.69px;line-height:13px;">00:00</span>
<span class="t" style="font-size:11px;color:#000;transform:scaleX(0.9234);left:661.30px;top:229.69px;line-height:13px;">Horário</span>
<div class="f" style="left:698px;top:225px;width:64px;height:22px;"></div>
<span class="t" style="font-size:11px;color:#000;transform:scaleX(0.9506);left:701.40px;top:228.69px;line-height:13px;">00:00</span>
<span class="t" style="font-size:11px;color:#000;transform:scaleX(0.9234);left:661.30px;top:251.69px;line-height:13px;">Horário</span>
<div class="flg" style="left:698px;top:247px;width:64px;height:22px;"></div>
<span class="t" style="font-size:11px;color:#000;transform:scaleX(0.9257);left:770.10px;top:120.29px;line-height:13px;">Cod.Rota RMS</span>
<div class="fg" style="left:851px;top:115px;width:121px;height:22px;"></div>
<div class="gb" style="left:768px;top:150px;width:281px;height:84px;"></div>
<div style="left:774px;top:145px;width:70.5px;height:12px;background:#fff;"></div>
<span class="t" style="font-size:11px;color:#000;transform:scaleX(0.9539);left:776.00px;top:143.69px;line-height:13px;">Cancelamento</span>
<span class="t" style="font-size:11px;color:#000;transform:scaleX(0.9497);left:870.60px;top:156.99px;line-height:13px;">Usuário</span>
<div class="fg" style="left:913px;top:153px;width:121px;height:22px;"></div>
<span class="t" style="font-size:11px;color:#000;transform:scaleX(0.9333);left:884.20px;top:180.69px;line-height:13px;">Data</span>
<div class="fg" style="left:913px;top:177px;width:121px;height:22px;"></div>
<span class="t" style="font-size:11px;color:#000;transform:scaleX(0.9394);left:883.50px;top:204.69px;line-height:13px;">Hora</span>
<div class="fg" style="left:913px;top:201px;width:121px;height:22px;"></div>
<div class="gb" style="left:489px;top:314px;width:780px;height:75px;"></div>
<div style="left:495px;top:308px;width:84px;height:12px;background:#fff;"></div>
<span class="t" style="font-size:11px;color:#000;transform:scaleX(0.9686);left:497.40px;top:307.99px;line-height:13px;">Ficha de Viagem</span>
<div class="f" style="left:491px;top:324px;width:780px;height:64px;border-color:#a0a0a0;"></div>
<div class="hd" style="left:492px;top:325px;width:13px;height:19px;"></div>
<div class="hd" style="left:505px;top:325px;width:83px;height:19px;"></div>
<div class="hd" style="left:588px;top:325px;width:91px;height:19px;"></div>
<div class="hd" style="left:679px;top:325px;width:70px;height:19px;"></div>
<span class="t" style="font-size:11px;color:#000;transform:scaleX(0.9471);left:507.00px;top:327.99px;line-height:13px;">Empresa</span>
<span class="t" style="font-size:11px;color:#000;transform:scaleX(0.9705);left:590.20px;top:327.99px;line-height:13px;">Ficha Viagem</span>
<span class="t" style="font-size:11px;color:#000;transform:scaleX(0.9401);left:680.90px;top:327.99px;line-height:13px;">Data Emissão</span>
<div style="left:505px;top:344px;width:243px;height:18px;background:#99ccff;"></div>
<div style="left:587px;top:344px;width:1px;height:18px;background:#d0e4f8;"></div>
<div style="left:678px;top:344px;width:1px;height:18px;background:#d0e4f8;"></div>
<div style="left:492px;top:344px;width:13px;height:19px;border-right:1px solid #c8c8c8;border-bottom:1px solid #c8c8c8;"></div>
<div style="left:496px;top:347px;width:0;height:0;border-top:5.500px solid transparent;border-bottom:5.500px solid transparent;border-left:6px solid #000;"></div>
<span class="t" style="font-size:11px;color:#000;transform:scaleX(1.0111);left:490.20px;top:389.69px;line-height:13px;">Observação</span>
<div class="f" style="left:488px;top:404px;width:780px;height:69px;"></div>
<div class="gb" style="left:4px;top:482px;width:1260px;height:120px;"></div>
<div style="left:10px;top:476px;width:229.5px;height:12px;background:#fff;"></div>
<span class="t" style="font-size:11px;color:#000;transform:scaleX(0.9637);left:12.60px;top:476.19px;line-height:13px;">Composição do Romaneio (Coletas e Entregas)</span>
<div class="f" style="left:6px;top:491px;width:1260px;height:110px;border-color:#a0a0a0;"></div>
<div class="hd" style="left:7px;top:492px;width:13px;height:20px;"></div>
<div class="hd" style="left:20px;top:492px;width:46px;height:20px;"></div>
<div class="hd" style="left:66px;top:492px;width:89px;height:20px;"></div>
<div class="hd" style="left:155px;top:492px;width:118px;height:20px;"></div>
<div class="hd" style="left:273px;top:492px;width:62px;height:20px;"></div>
<div class="hd" style="left:335px;top:492px;width:124px;height:20px;"></div>
<div class="hd" style="left:459px;top:492px;width:79px;height:20px;"></div>
<div class="hd" style="left:538px;top:492px;width:65px;height:20px;"></div>
<div class="hd" style="left:603px;top:492px;width:82px;height:20px;"></div>
<div class="hd" style="left:685px;top:492px;width:89px;height:20px;"></div>
<div class="hd" style="left:774px;top:492px;width:251px;height:20px;"></div>
<div class="hd" style="left:1025px;top:492px;width:30px;height:20px;"></div>
<div class="hd" style="left:1055px;top:492px;width:73px;height:20px;"></div>
<div class="hd" style="left:1128px;top:492px;width:124px;height:20px;"></div>
<div class="hd" style="left:1252px;top:492px;width:10px;height:20px;"></div>
<div class="nv" style="left:20px;top:512px;width:1240px;height:18px;"></div>
<div style="left:65px;top:512px;width:1px;height:18px;background:#fff;"></div>
<div style="left:154px;top:512px;width:1px;height:18px;background:#fff;"></div>
<div style="left:272px;top:512px;width:1px;height:18px;background:#fff;"></div>
<div style="left:334px;top:512px;width:1px;height:18px;background:#fff;"></div>
<div style="left:458px;top:512px;width:1px;height:18px;background:#fff;"></div>
<div style="left:537px;top:512px;width:1px;height:18px;background:#fff;"></div>
<div style="left:602px;top:512px;width:1px;height:18px;background:#fff;"></div>
<div style="left:684px;top:512px;width:1px;height:18px;background:#fff;"></div>
<div style="left:773px;top:512px;width:1px;height:18px;background:#fff;"></div>
<div style="left:1024px;top:512px;width:1px;height:18px;background:#fff;"></div>
<div style="left:1054px;top:512px;width:1px;height:18px;background:#fff;"></div>
<div style="left:1127px;top:512px;width:1px;height:18px;background:#fff;"></div>
<div style="left:1251px;top:512px;width:1px;height:18px;background:#fff;"></div>
<div style="left:1261px;top:512px;width:1px;height:18px;background:#fff;"></div>
<div style="left:7px;top:512px;width:13px;height:19px;border-right:1px solid #c8c8c8;border-bottom:1px solid #c8c8c8;background:#fff;"></div>
<div style="left:11px;top:515px;width:0;height:0;border-top:5.500px solid transparent;border-bottom:5.500px solid transparent;border-left:6px solid #000;"></div>
<span class="t" style="font-size:11px;color:#000;transform:scaleX(0.9269);left:22.50px;top:495.69px;line-height:13px;">Seq.</span>
<svg style="left:53px;top:497px;width:9px;height:10px" viewBox="0 0 9 10"><path d="M0.400 0.400h8.200L4.500 9.600z" fill="#c8c8c8" stroke="#8c8c8c" stroke-width="0.8"/></svg>
<span class="t" style="font-size:11px;color:#000;transform:scaleX(0.9405);left:68.00px;top:495.69px;line-height:13px;">Empresa Col./Ent.</span>
<span class="t" style="font-size:11px;color:#000;transform:scaleX(0.9978);left:157.00px;top:495.69px;line-height:13px;">Descrição</span>
<span class="t" style="font-size:11px;color:#000;transform:scaleX(0.9242);left:275.00px;top:495.69px;line-height:13px;">Coleta</span>
<span class="t" style="font-size:11px;color:#000;transform:scaleX(0.8822);left:337.00px;top:495.69px;line-height:13px;">Nº CRT</span>
<span class="t" style="font-size:11px;color:#000;transform:scaleX(0.9408);left:461.70px;top:495.69px;line-height:13px;">Sequência CRT</span>
<span class="t" style="font-size:11px;color:#000;transform:scaleX(0.9373);left:545.50px;top:495.69px;line-height:13px;">Tipo Docto</span>
<span class="t" style="font-size:11px;color:#000;transform:scaleX(0.9835);left:606.10px;top:495.69px;line-height:13px;">Nº Docto Fiscal</span>
<span class="t" style="font-size:11px;color:#000;transform:scaleX(0.9323);left:687.40px;top:495.69px;line-height:13px;">Remetente</span>
<span class="t" style="font-size:11px;color:#000;transform:scaleX(0.8826);left:776.70px;top:495.69px;line-height:13px;">Nome</span>
<span class="t" style="font-size:11px;color:#000;transform:scaleX(0.9109);left:1027.60px;top:495.69px;line-height:13px;">Série</span>
<span class="t" style="font-size:11px;color:#000;transform:scaleX(0.9722);left:1057.20px;top:495.69px;line-height:13px;">Nº Nota Fiscal</span>
<span class="t" style="font-size:11px;color:#000;transform:scaleX(0.9654);left:1130.30px;top:495.69px;line-height:13px;">Situação Baixa</span>
<span class="t" style="font-size:11px;color:#fff;left:54.67px;top:514.69px;line-height:13px;">1</span>
<span class="t" style="font-size:11px;color:#fff;left:133.14px;top:514.69px;line-height:13px;">110</span>
<div style="left:203px;top:512px;width:66px;height:18px;overflow:hidden;"><span class="t" style="left:-2.3px;top:2.700px;color:#fff;transform:scaleX(0.9);">N TRANSPORT</span></div>
<span class="t" style="font-size:11px;color:#fff;transform:scaleX(0.9241);left:300.90px;top:514.69px;line-height:13px;">18941</span>
<span class="t" style="font-size:11px;color:#fff;transform:scaleX(0.9656);left:687.40px;top:514.69px;line-height:13px;">08225554000107</span>
<span class="t" style="font-size:11px;color:#fff;transform:scaleX(0.8946);left:776.70px;top:514.69px;line-height:13px;">REVOLUTION COM E SERV DE ELETRODOMESTICO</span>
<span class="t" style="font-size:11px;color:#fff;transform:scaleX(0.9567);left:1130.30px;top:514.69px;line-height:13px;">Não Baixado</span>
<div style="left:266px;top:490px;width:72px;height:44px;border:5px solid #003c00;"></div>
</div>
</body>
</html>
